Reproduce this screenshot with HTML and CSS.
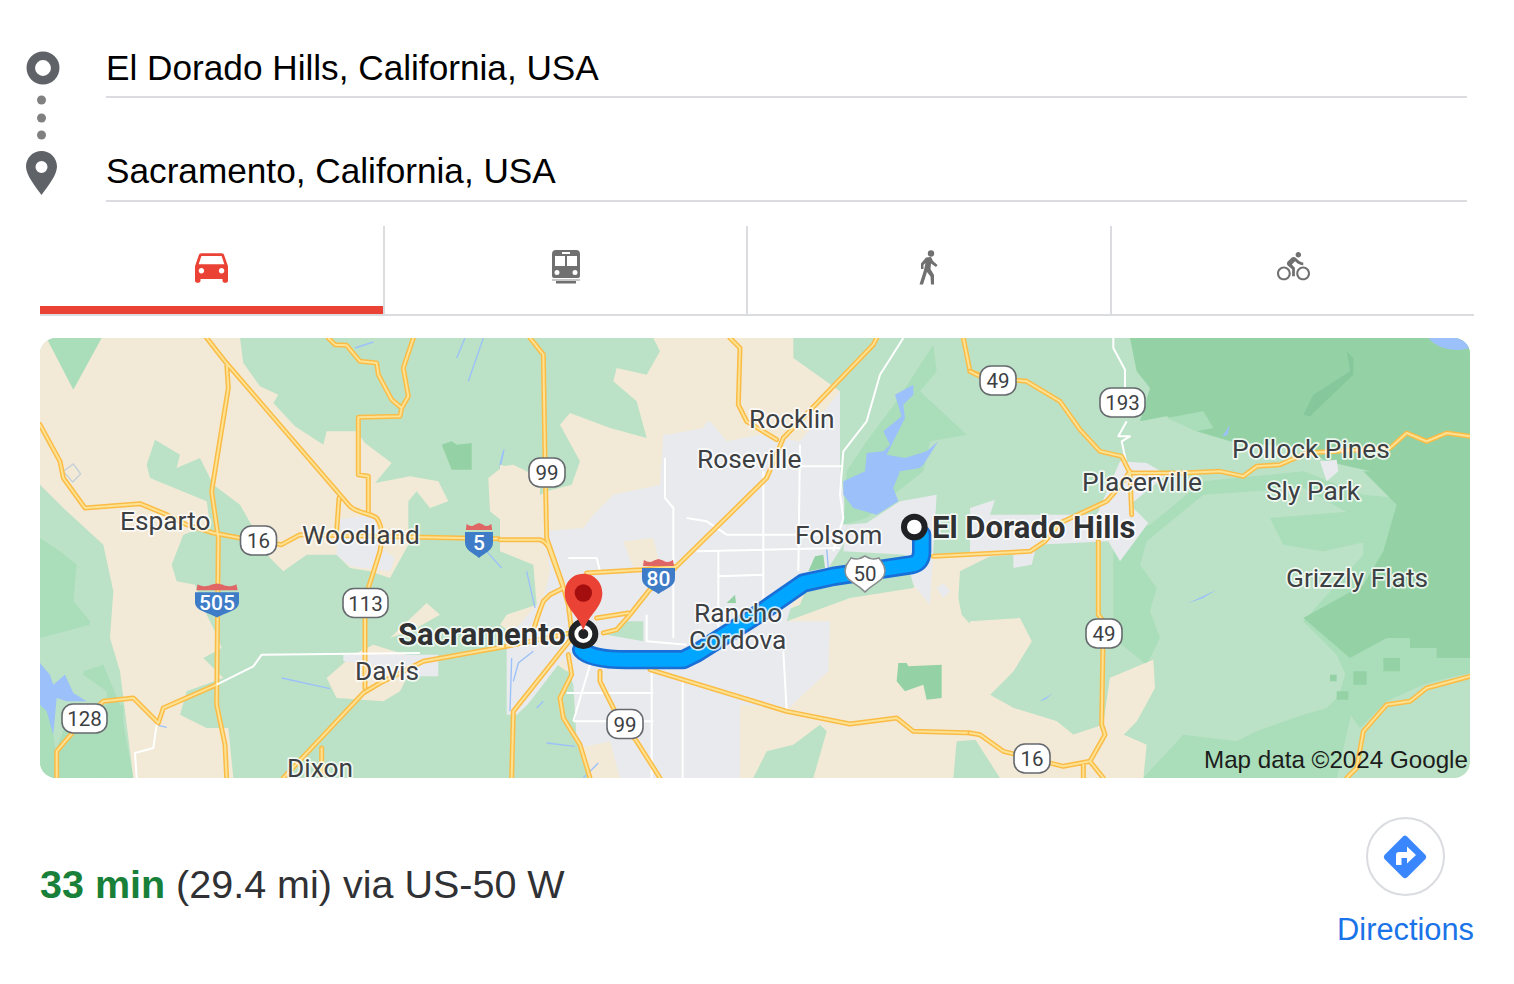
FILE: index.html
```html
<!DOCTYPE html>
<html lang="en">
<head>
<meta charset="utf-8">
<title>Directions</title>
<link rel="stylesheet" href="styles.css">
</head>
<body>
<main class="card">
  <section class="route">
    <svg class="route-icons" width="40" height="150" viewBox="0 0 40 150">
      <circle class="ring" cx="17" cy="18" r="12.2"/>
      <circle class="dot" cx="15.5" cy="50" r="4.5"/>
      <circle class="dot" cx="15.5" cy="68" r="4.5"/>
      <circle class="dot" cx="15.5" cy="85" r="4.5"/>
      <path class="pin" fill-rule="evenodd" d="M15.5 101C7 101 0 107.800 0 116.500C0 125 9 136 15.500 145C22 136 31 125 31 116.500C31 107.800 24 101 15.500 101ZM15.500 111A6 6 0 1 1 15.500 123A6 6 0 1 1 15.500 111Z"/>
    </svg>
    <div class="fields">
      <div class="field">El Dorado Hills, California, USA</div>
      <div class="field">Sacramento, California, USA</div>
    </div>
  </section>

  <nav class="tabs">
    <div class="tab active">
      <svg class="icon-car" width="33" height="30" viewBox="3 5 18 16"><path d="M18.920 6.010C18.720 5.420 18.160 5 17.500 5h-11c-.66 0-1.210.42-1.420 1.010L3 12v8c0 .55.45 1 1 1h1c.55 0 1-.45 1-1v-1h12v1c0 .55.45 1 1 1h1c.55 0 1-.45 1-1v-8l-2.080-5.990zM6.500 16c-.83 0-1.500-.67-1.500-1.500S5.670 13 6.500 13s1.500.67 1.500 1.500S7.330 16 6.500 16zm11 0c-.83 0-1.500-.67-1.500-1.500s.67-1.500 1.500-1.500 1.500.67 1.500 1.500-.67 1.500-1.500 1.500zM5 11l1.500-4.500h11L19 11H5z"/></svg>
    </div>
    <div class="tab">
      <svg class="icon-train" width="28" height="34" viewBox="0 0 28 34">
        <path fill-rule="evenodd" d="M4 0H24Q28 0 28 4V26Q28 28 26 28H2Q0 28 0 26V4Q0 0 4 0ZM10 2V4H18V2ZM3 6V16H13V6ZM15 6V16H25V6ZM5 20A2.500 2.500 0 1 0 5 25A2.500 2.500 0 1 0 5 20ZM23 20A2.500 2.500 0 1 0 23 25A2.500 2.500 0 1 0 23 20Z"/>
        <rect class="train-strip" x="0" y="29" width="28" height="2"/>
        <rect x="4" y="31" width="20" height="2.500"/>
      </svg>
    </div>
    <div class="tab">
      <svg class="icon-walk" width="22" height="35" viewBox="0 0 22 35">
        <circle cx="13" cy="3.500" r="3.200"/>
        <path d="M8 7.500L13 7L15 11L19.500 15L18 17L13 13.500L12.500 19L16 25L16 34.500H13L12.500 26.500L9 22L5 34.500H1.500L6 20L7.500 13L5.500 15V19H3V13.500Z"/>
      </svg>
    </div>
    <div class="tab">
      <svg class="icon-bike" width="33" height="31" viewBox="0 0 24 22.500"><path d="M15.500 5.500c1.100 0 2-.9 2-2s-.9-2-2-2-2 .9-2 2 .9 2 2 2zM5 12c-2.800 0-5 2.200-5 5s2.200 5 5 5 5-2.200 5-5-2.200-5-5-5zm0 8.500c-1.900 0-3.500-1.600-3.500-3.500s1.600-3.500 3.500-3.500 3.500 1.600 3.500 3.500-1.600 3.500-3.500 3.500zm5.800-10l2.400-2.400.8.8c1.300 1.300 3 2.100 5.100 2.100V9c-1.500 0-2.700-.6-3.600-1.500l-1.900-1.900c-.5-.4-1-.6-1.600-.6s-1.100.2-1.400.6L7.800 8.400c-.4.400-.6.900-.6 1.400 0 .6.200 1.100.6 1.400L11 14v5h2v-6.200l-2.200-2.300zM19 12c-2.800 0-5 2.200-5 5s2.200 5 5 5 5-2.200 5-5-2.200-5-5-5zm0 8.500c-1.900 0-3.500-1.600-3.500-3.500s1.600-3.500 3.500-3.500 3.500 1.600 3.500 3.500-1.600 3.500-3.500 3.500z"/></svg>
    </div>
  </nav>

  <svg class="map" width="1430" height="440" viewBox="0 0 1430 440">
    <defs>
      <path id="road-west" d="M500,0L555,70L930,505C950,525 990,525 1010,540C1025,560 1030,590 1020,640L985,750L975,800L975,1050M560,75L565,150L515,460L535,600L530,1100L555,1220L560,1320M0,260L60,370L70,420L135,510L300,497L380,530L440,560L520,585L600,600L725,620L780,590L1500,605M865,0L885,20L920,22L960,70L1010,75L1015,110L1055,185L1085,210L1105,175L1090,90L1120,0M1085,210L1080,235L955,238L955,410L985,415L985,520M897,480L890,580M50,1320L50,1240L75,1210L110,1170L190,1090L280,1080L355,1155L370,1110L530,1040M730,1320L970,1065L1020,1035L1150,970L1400,925M845,1230L845,1320"/>
      <path id="road-mid" d="M90,0L130,50L135,360L140,600L185,730L205,800L215,880M0,605L120,605Q135,610 145,625L190,750M20,925L210,885M260,705L425,695L530,685L800,420L850,300L1120,20L1130,0M690,0L720,30L715,200L740,250L830,305M390,830L445,760L470,735L525,690M290,840L385,825M310,885L350,875L390,830M130,790Q110,840 100,880M190,750L150,770L130,790M300,1000L300,1030L350,1130L410,1210L480,1320M205,950L215,1010L180,1080L190,1140L240,1220L270,1320M215,900L40,1120L35,1320M450,995L860,1120L1050,1158L1190,1140L1240,1180L1420,1185L1500,1240M1390,0L1410,100L1450,115"/>
      <path id="road-east" d="M-110,655L180,640L225,610L270,555L410,490L445,450L480,400M480,405L640,405L750,400L820,415L860,385L930,380L1010,345L1260,330L1310,285L1370,310L1430,285L1500,295M0,100L30,115L170,130L270,190L330,275L390,340L455,355L480,405L485,530M385,610L385,830L400,850L395,1160L405,1190L360,1270M0,1185L30,1190L100,1240L280,1285L360,1270L400,1320M340,1280L340,1320M1130,1320L1160,1290L1180,1180L1250,1100L1320,1090L1370,1050L1500,1015"/>
      <path id="i-red" d="M.03,.2L.06,.02C.16,.1 .28,.1 .36,.04L.5,0L.64,.04C.72,.1 .84,.1 .94,.02L.97,.2Z"/>
      <path id="i-blue" d="M0,.26H1V.55C1,.8 .72,.84 .5,1C.28,.84 0,.8 0,.55Z"/>
      <path id="route-line" d="M1265,590L1265,640Q1265,675 1235,680L1000,715L910,735L780,825L590,945L550,965L380,965Q270,965 245,935"/>
    </defs>

    <rect class="green" width="1430" height="440"/>

    <g class="zone-west">
      <path class="shade" d="M0,600L60,640L110,680L100,790L150,850L130,1000L190,980L240,1100L280,1320L0,1320Z"/>
      <path class="green" d="M150,860L130,1010L200,1060L210,1200L170,1320L60,1320L40,1190L0,1000L0,900Z"/>
      <path class="beige" d="M0,0L600,0L610,75L660,145L715,170L700,195L765,265L850,320L860,280L950,280L975,315L1055,375L1005,435L1110,415L1195,430L1225,490L1170,510L1130,460L1105,490L1105,620L1050,720L990,700L930,690L890,650L800,650L730,700L690,660L600,500L520,440L480,360L410,390L420,350L345,305L320,380L330,420L500,490L510,560L430,590L395,680L410,730L465,740L495,820L530,890L545,930L490,960L550,1020L440,1060L420,1130L500,1170L565,1170L580,1320L280,1320L240,1000L210,900L220,760L190,620L70,510L0,440Z"/>
      <path class="beige" d="M1345,420L1390,385L1420,380L1500,420L1500,640L1440,610L1400,560L1350,520Z"/>
      <path class="shade" d="M30,20L100,155L185,0L20,0Z"/>
      <path class="beige" d="M860,1020L940,950L1000,920L1130,960L1080,1060L1030,1090L890,1080ZM1050,900L1160,795L1200,830L1130,870Z"/>
      <path class="grey" d="M890,650L890,545L1000,530L1035,640L1065,660L1050,700L930,685ZM910,950H1195V1015H1100L1000,980L910,970Z"/>
      <path class="forest" d="M1205,320L1235,310L1250,320L1295,315L1295,395L1235,395Z"/>
      <path class="shade" d="M100,1100L250,1100L250,1200L180,1320L60,1320L50,1230Z"/>
      <path class="water" d="M0,975L30,1010L40,1040L75,1010L100,1065L140,1090L80,1090L50,1080L40,1190L20,1120L0,1100Z"/>
      <path class="water-thin" d="M945,30L1000,12M725,1020L870,1052M1250,60L1275,0M1285,130L1330,0M1380,390L1392,335M1340,640L1385,690M355,1162L380,1168"/>
      <path class="poly" d="M70,400L100,378L122,408L98,432Z"/>
      <use href="#road-west" class="case"/><use href="#road-west" class="fill"/>
      <path class="white" d="M530,1040L640,985L665,950L1140,945M350,1160L340,1230L285,1245L290,1320"/>
    </g>

    <g class="zone-mid">
      <path class="beige" d="M0,380L40,390L90,490L140,460L215,440L240,370L180,260L210,225L330,270L440,300L410,190L340,130L350,90L440,110L480,40L460,0L880,0L880,60L1020,160L1020,500L900,800L400,1000L200,1000L0,860L20,830L110,800L100,680L0,640Z"/>
      <path class="beige" d="M400,1000L860,850L1050,780L1240,750L1290,650L1500,640L1380,700L1375,780L1385,830L1430,880L1560,845L1595,910L1540,1000L1470,1070L1540,1110L1670,1150L1720,1190L1810,1160L1830,1020L1960,965L1965,1050L1910,1150L1870,1190L1940,1220L1930,1320L400,1320Z"/>
      <path class="grey" d="M280,530L340,470L480,440L490,290L630,250L680,310L780,290L900,310L1020,160L1020,380L1040,560L1030,620L985,690L900,720L860,850L990,850L985,1000L860,1115L720,1100L720,1320L270,1320L230,1210L220,1040L190,960L60,1130L20,1130L20,900L130,780L150,700L130,580L250,570Z"/>
      <path class="beige" d="M370,610L460,600L480,680L400,690ZM240,1230L330,1210L360,1320L270,1320ZM440,230L550,230L590,190L640,210L610,270L500,290Z"/>
      <path class="green" d="M50,1130L190,1000L230,1200L230,1320L40,1320ZM370,850L430,850L430,910L320,890Z"/>
      <path class="green" d="M760,1320L800,1240L880,1220L960,1160L980,1180L960,1250L940,1320ZM1360,1320L1370,1210L1500,1200L1500,1320ZM1470,1080L1500,1050V1110Z"/>
      <path class="shade" d="M1040,400L1100,310L1190,190L1300,20L1310,100L1260,160L1400,290L1290,310L1270,400L1180,470L1100,540L1030,560Z"/>
      <path class="forest" d="M925,700L945,655L970,650L975,690ZM680,795L705,770L708,795ZM1195,975L1220,975L1225,985L1325,980L1325,1080L1280,1085L1270,1040L1215,1060L1190,1030Z"/>
      <path class="grey" d="M1040,560L1100,555L1200,490L1310,470L1290,800L1240,740L1215,650L1030,640ZM1310,750L1330,735L1350,760L1330,780Z"/>
      <path class="water" d="M1030,430L1095,400L1100,345L1150,340L1170,320L1150,280L1205,235L1185,170L1240,140L1240,170L1210,200L1215,240L1160,350L1215,360L1280,340L1315,310L1270,380L1260,390L1200,400L1180,450L1195,490L1130,530L1060,510L1030,470Z"/>
      <path class="water-thin" d="M0,380L10,340M80,700L105,810M35,960L30,1120M100,940L55,975L40,1030M130,1090L110,1110M140,1215L225,1225M250,1320L295,1275M980,630L985,690"/>
      <path class="white" d="M495,360L495,480L520,510L520,900M560,540L620,550L680,590L1020,590M590,640L1020,630M655,640L655,900M655,715L790,710M790,400L790,800M900,320L895,700M900,385L1030,385M1210,0L1140,110L1100,250L1030,340L1020,470L1030,540L1000,640M440,830L440,910L560,920M850,940L860,1115M270,980L220,1150M200,1065L460,1065M220,1150L460,1150M455,1000L455,1320M548,1020L548,1320M205,660L290,660L300,700"/>
      <use href="#road-mid" class="case"/><use href="#road-mid" class="fill"/>
    </g>

    <g class="zone-east">
      <path class="shade" d="M430,600L540,560L700,430L1000,400L1180,470L1500,500V1000L1150,1100L1100,1320L520,1320L560,1190L600,1000L570,900L530,980L430,900L430,750Z"/>
      <path class="green" d="M510,680L530,610L700,470L1000,450L1180,550L1180,650L1000,850L1100,950L1140,1040L1070,1110L1000,1130L860,1180L800,1210L640,1190L520,1320L540,970L570,900L540,820L560,750Z"/>
      <path class="forest" d="M480,0L500,100L540,150L510,250L590,235L680,280L780,310L1000,330L1070,370L1200,400L1260,430L1500,430V0Z"/>
      <path class="shade" d="M1140,960L1250,900L1500,900V1005L1370,1035L1250,1090L1170,1170L1105,1080Z"/>
      <path class="forest" d="M1180,400H1500V960H1400V930H1320V900H1250L1140,960L1000,840L1180,740L1240,640L1280,500Z"/>
      <path class="forest" d="M1150,1000H1190V1040H1150ZM1240,960H1290V1000H1240ZM1080,1010H1100V1030H1080ZM1100,1060H1135V1085H1100Z"/>
      <path class="shade" d="M590,240L700,220L730,270L680,280ZM900,540L1150,520L1240,600L1060,640L940,620Z"/>
      <path class="dark" d="M1130,40L1140,100L1030,170L1000,230L1020,235L1150,110L1150,60Z"/>
      <path class="water" d="M1375,0H1500V30C1450,45 1400,30 1375,0ZM650,797L740,755L700,780ZM208,1090L250,1065L225,1085ZM757,295L780,260L772,292Z"/>
      <path class="white" d="M430,0L430,30L465,95L465,190M470,250L445,295L480,295L455,310L470,380"/>
      <path class="grey" d="M0,510L75,485L60,530L380,530L450,370L530,375L590,410L480,500L535,555L450,670L415,610L200,620L185,680L130,690L130,650L0,660ZM1050,370L1100,365L1105,400L1070,430ZM395,1190L430,1195L410,1230L385,1225Z"/>
      <path class="beige" d="M0,850L150,840L185,910L130,1000L60,1070L130,1110L260,1150L310,1190L400,1160L420,1020L550,965L555,1050L500,1150L460,1190L530,1220L520,1320L90,1320L0,1180Z"/>
      <use href="#road-east" class="case"/><use href="#road-east" class="fill"/>
    </g>

    <g class="zone-mid">
      <use href="#route-line" class="route-case"/><use href="#route-line" class="route-fill"/>
      <circle class="start-marker" cx="1243" cy="567" r="31"/>
      <circle class="end-ring" cx="250" cy="888" r="36"/>
      <circle class="end-dot" cx="250" cy="888" r="15"/>
      <path class="marker" d="M250,707C215,707 194,735 194,765C194,810 235,830 250,878C265,830 307,810 307,765C307,735 285,707 250,707Z"/>
      <circle class="marker-core" cx="250" cy="765" r="26"/>
    </g>

    <g class="interstate" transform="translate(155,245.500)"><g transform="scale(44,34)"><use href="#i-red" class="i-red"/><use href="#i-blue" class="i-blue"/></g><text class="i-num" x="22" y="26">505</text></g>
    <g class="interstate" transform="translate(425,185)"><g transform="scale(28,35)"><use href="#i-red" class="i-red"/><use href="#i-blue" class="i-blue"/></g><text class="i-num" x="14" y="27">5</text></g>
    <g class="interstate" transform="translate(602,221)"><g transform="scale(33,35)"><use href="#i-red" class="i-red"/><use href="#i-blue" class="i-blue"/></g><text class="i-num" x="16.500" y="27">80</text></g>

    <g class="us50" transform="translate(805,217)">
      <path class="us-shape" d="M6,3C12,5 15,4 20,1C25,4 28,5 34,3C36,7 40,9 40,16C40,26 28,28 20,37C12,28 0,26 0,16C0,9 4,7 6,3Z"/>
      <text class="shield-text" x="20" y="26">50</text>
    </g>

    <g class="shield" transform="translate(200.500,188)"><rect class="s-box" width="36" height="29" rx="11"/><text class="shield-text" x="18" y="22">16</text></g>
    <g class="shield" transform="translate(22,366)"><rect class="s-box" width="45" height="29" rx="11"/><text class="shield-text" x="22.500" y="22">128</text></g>
    <g class="shield" transform="translate(303,250.500)"><rect class="s-box" width="45" height="29" rx="11"/><text class="shield-text" x="22.500" y="22">113</text></g>
    <g class="shield" transform="translate(489,120)"><rect class="s-box" width="36" height="29" rx="11"/><text class="shield-text" x="18" y="22">99</text></g>
    <g class="shield" transform="translate(567,371.500)"><rect class="s-box" width="36" height="29" rx="11"/><text class="shield-text" x="18" y="22">99</text></g>
    <g class="shield" transform="translate(940,28)"><rect class="s-box" width="36" height="29" rx="11"/><text class="shield-text" x="18" y="22">49</text></g>
    <g class="shield" transform="translate(1060,50)"><rect class="s-box" width="45" height="29" rx="11"/><text class="shield-text" x="22.500" y="22">193</text></g>
    <g class="shield" transform="translate(1046,281)"><rect class="s-box" width="36" height="29" rx="11"/><text class="shield-text" x="18" y="22">49</text></g>
    <g class="shield" transform="translate(974,406)"><rect class="s-box" width="36" height="29" rx="11"/><text class="shield-text" x="18" y="22">16</text></g>

    <text class="place" x="709" y="90">Rocklin</text>
    <text class="place" x="657" y="130">Roseville</text>
    <text class="place" x="755" y="206">Folsom</text>
    <text class="place" x="654" y="284">Rancho</text>
    <text class="place" x="649" y="311">Cordova</text>
    <text class="place" x="80" y="192">Esparto</text>
    <text class="place" x="262" y="206">Woodland</text>
    <text class="place" x="315" y="342">Davis</text>
    <text class="place" x="247" y="439">Dixon</text>
    <text class="place" x="1042" y="153">Placerville</text>
    <text class="place" x="1192" y="120">Pollock Pines</text>
    <text class="place" x="1226" y="162">Sly Park</text>
    <text class="place" x="1246" y="249">Grizzly Flats</text>
    <text class="place-bold" x="358" y="307">Sacramento</text>
    <text class="place-bold" x="892" y="200">El Dorado Hills</text>
    <text class="credit" x="1164" y="430">Map data ©2024 Google</text>
  </svg>

  <section class="summary">
    <p class="trip"><strong class="time">33 min</strong> (29.4 mi) via US-50 W</p>
    <div class="action">
      <div class="action-circle">
        <svg width="44" height="44" viewBox="0 0 44 44">
          <path class="action-diamond" d="M22 .5Q23 .5 24 1.500L42.500 20Q44 22 42.500 24L24 42.500Q22 44 20 42.500L1.500 24Q0 22 1.500 20L20 1.500Q21 .5 22 .5Z"/>
          <path class="action-arrow" d="M13 30V20Q13 17 16 17H24V11.500L33 20L24 28.500V23H18.500V30Z"/>
        </svg>
      </div>
      <span class="action-label">Directions</span>
    </div>
  </section>
</main>
</body>
</html>
```

FILE: styles.css
```css
* { box-sizing: border-box; }

html, body {
  margin: 0;
  height: 100%;
  background: #fff;
}

body {
  font-family: "Liberation Sans", Arial, sans-serif;
  overflow: hidden;
}

.card {
  display: flex;
  flex-direction: column;
  padding-top: 36px;
}

.route {
  display: flex;
  padding: 0 47px 0 26px;
}

.route-icons {
  flex: 0 0 40px;
  margin: 14px 40px 0 0;
}

.fields {
  flex: 1;
  display: flex;
  flex-direction: column;
  gap: 40px;
}

.field {
  height: 62px;
  padding-top: 10px;
  border-bottom: 2px solid #dadce0;
  font-size: 35.2px;
  line-height: 44px;
  color: #000;
}

.field + .field { height: 64px; padding-top: 11px; }

.ring { fill: #fff; stroke: #5f6368; stroke-width: 8.5; }
.dot { fill: #808080; }
.pin { fill: #5f6368; }

.tabs {
  display: grid;
  grid-template-columns: 345px 363px 364px 1fr;
  width: 1434px;
  height: 90px;
  margin: 24px 0 0 40px;
  border-bottom: 2px solid #dadce0;
}

.tab {
  display: flex;
  justify-content: center;
  padding-top: 24px;
  border-right: 2px solid #dadce0;
  position: relative;
}

.tab:last-child { border-right: 0; }

.tab svg { fill: #707070; }
.tab.active svg { fill: #ea4335; margin-top: 3px; }

.tab.active::after {
  content: "";
  position: absolute;
  left: 0;
  right: 0;
  bottom: 0;
  height: 8px;
  background: #ea4335;
}

.train-strip { fill: #c8c8c8; }

.map {
  display: block;
  margin: 22px 0 0 40px;
  border-radius: 16px;
  flex: none;
}

.green { fill: #bbe2c6; }
.shade { fill: #aaddb9; }
.forest { fill: #94d2a5; }
.dark { fill: #86c89b; }
.beige { fill: #f2ead7; }
.grey { fill: #e8eaed; }
.water { fill: #9cc0f9; }
.water-thin { fill: none; stroke: #9cc0f9; stroke-width: 4; }
.poly { fill: none; stroke: #c4d0d8; stroke-width: 4; }

.zone-west { transform: scale(0.33333); }
.zone-mid { transform: translate(460px, 0) scale(0.33333); }
.zone-east { transform: translate(930px, 0) scale(0.33333); }

.case { fill: none; stroke: #fbbc46; stroke-width: 15; stroke-linejoin: round; stroke-linecap: round; }
.fill { fill: none; stroke: #fde293; stroke-width: 6; stroke-linejoin: round; stroke-linecap: round; }
.white { fill: none; stroke: #fff; stroke-width: 6; stroke-linejoin: round; }

.route-case { fill: none; stroke: #1a6fd6; stroke-width: 58; stroke-linejoin: round; stroke-linecap: round; }
.route-fill { fill: none; stroke: #00a5ff; stroke-width: 42; stroke-linejoin: round; stroke-linecap: round; }

.start-marker { fill: #fff; stroke: #202124; stroke-width: 18; }
.end-ring { fill: #fff; stroke: #202124; stroke-width: 18; }
.end-dot { fill: #202124; }
.marker { fill: #ea4335; }
.marker-core { fill: #a50e0e; }

.i-red { fill: #e06666; }
.i-blue { fill: #3f7cc8; }
.i-num {
  font-family: Roboto, sans-serif;
  font-weight: 500;
  font-size: 21px;
  fill: #fff;
  text-anchor: middle;
}

.s-box { fill: #fff; stroke: #666a6e; stroke-width: 1.6; }
.us-shape { fill: #fff; stroke: #8a8d90; stroke-width: 1.5; }

.shield-text {
  font-family: Roboto, sans-serif;
  font-size: 20.5px;
  fill: #3c4043;
  text-anchor: middle;
}

.place, .place-bold {
  font-family: Roboto, sans-serif;
  fill: #3c4043;
  stroke: #fff;
  stroke-opacity: 0.8;
  stroke-width: 3.5;
  paint-order: stroke;
  stroke-linejoin: round;
}

.place { font-size: 26.3px; }
.place-bold { font-size: 31px; font-weight: 700; fill: #2f3133; }

.credit {
  font-family: "Liberation Sans", Arial, sans-serif;
  font-size: 24.2px;
  fill: #1c1c1c;
}

.summary {
  display: flex;
  justify-content: space-between;
  width: 1434px;
  margin: 39px 0 0 40px;
}

.trip {
  margin: 45px 0 0;
  font-size: 39.5px;
  line-height: 44px;
  color: #303134;
}

.time { color: #188038; }

.action {
  display: flex;
  flex-direction: column;
  align-items: center;
  gap: 16px;
}

.action-circle {
  display: flex;
  align-items: center;
  justify-content: center;
  width: 79px;
  height: 79px;
  margin-right: 1px;
  border: 2px solid #dadce0;
  border-radius: 50%;
}

.action-diamond { fill: #3a86ff; }
.action-arrow { fill: #fff; }

.action-label {
  font-size: 30.8px;
  line-height: 36px;
  color: #1a73e8;
}
```
